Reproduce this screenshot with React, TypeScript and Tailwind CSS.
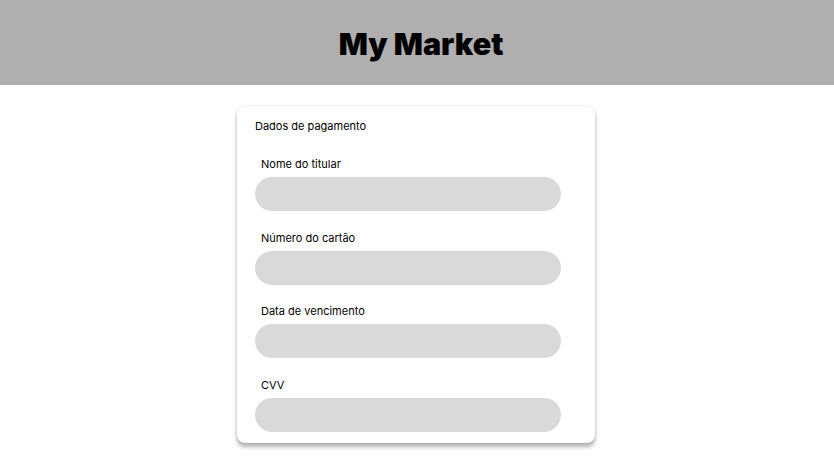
const fields = ["Nome do titular", "Número do cartão", "Data de vencimento", "CVV"];
const gaps = ["mt-[24px]", "mt-[20px]", "mt-[19px]", "mt-[20px]"];

export default function App() {
  return (
    <div className="min-h-screen bg-white flex flex-col font-['Inter',sans-serif] text-black">
      <header className="h-[85px] bg-[#b0aeae] flex items-center justify-center">
        <h1 className="text-[30.5px] font-black pt-[2px] pl-[8px]">My Market</h1>
      </header>
      <main className="flex justify-center pt-[21px] pr-[2px]">
        <div className="w-[358px] bg-white rounded-[8px] shadow-[0_4px_4px_rgba(0,0,0,0.3),0_0_2px_rgba(0,0,0,0.15)] pt-[13px] px-[18px] pb-[11px] flex flex-col">
          <h2 className="text-[11px] leading-[14px]">Dados de pagamento</h2>
          {fields.map((f, i) => (
            <div key={f} className={`${gaps[i]} flex flex-col`}>
              <label className="text-[11px] leading-[14px] pl-[6px]">{f}</label>
              <div className="mt-[6px] w-[306px] h-[34px] rounded-full bg-[#d9d9d9]" />
            </div>
          ))}
        </div>
      </main>
    </div>
  );
}
